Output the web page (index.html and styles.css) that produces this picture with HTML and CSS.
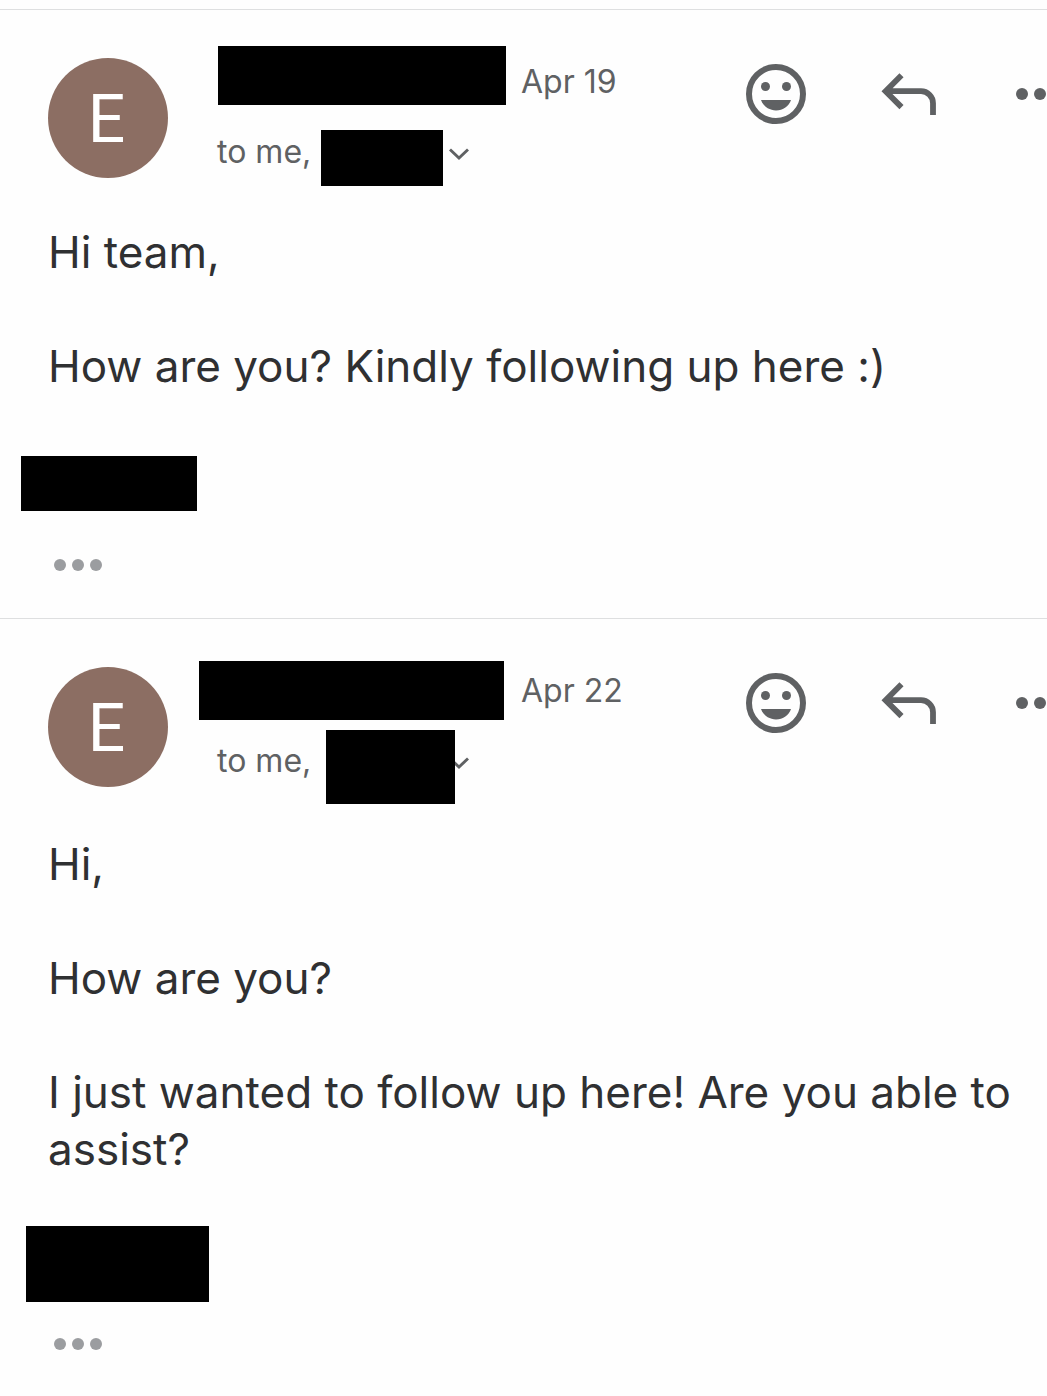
FILE: index.html
```html
<!DOCTYPE html>
<html lang="en">
<head>
<meta charset="utf-8">
<meta name="viewport" content="width=device-width, initial-scale=1">
<title>Conversation</title>
<link rel="stylesheet" href="styles.css">
</head>
<body>
<svg class="sprite" aria-hidden="true">
  <symbol id="smile" viewBox="0 0 60 60">
    <circle cx="30" cy="30" r="27" fill="none" stroke="currentColor" stroke-width="6"/>
    <circle cx="19.500" cy="22.500" r="4.500"/>
    <circle cx="40.500" cy="22.500" r="4.500"/>
    <path d="M15 36h30c-2 6-8 10.500-15 10.500S17 42 15 36z"/>
  </symbol>
  <symbol id="reply" viewBox="0 0 60 60">
    <path d="M20.500 11.300 4.600 27.200 20.500 43.100M5.500 27.200H40A12 12 0 0 1 52 39.200V51" fill="none" stroke="currentColor" stroke-width="5.800"/>
  </symbol>
  <symbol id="dots" viewBox="0 0 48 12">
    <circle cx="6" cy="6" r="6"/><circle cx="24" cy="6" r="6"/><circle cx="42" cy="6" r="6"/>
  </symbol>
  <symbol id="chevron" viewBox="0 0 20 12">
    <path d="M1 1.500 10 10 19 1.500" fill="none" stroke="currentColor" stroke-width="2.900"/>
  </symbol>
</svg>
<main class="thread">
  <article class="message message-first">
    <header class="message-header">
      <div class="avatar">E</div>
      <div class="details">
        <div class="sender-row"><span class="name"><span class="redaction"></span></span><time datetime="04-19">Apr 19</time></div>
        <div class="recipient-row"><span>to me,</span><span class="recipient"><span class="redaction"></span></span>
          <button class="expand" aria-label="Show details"><svg width="20" height="12"><use href="#chevron"/></svg></button></div>
      </div>
      <div class="actions">
        <button aria-label="Add reaction"><svg width="60" height="60"><use href="#smile"/></svg></button>
        <button aria-label="Reply"><svg width="60" height="60"><use href="#reply"/></svg></button>
        <button aria-label="More options"><svg width="48" height="12"><use href="#dots"/></svg></button>
      </div>
    </header>
    <div class="content">
      <p>Hi team,</p>
      <p>How are you? Kindly following up here :)</p>
      <div class="signature"><span class="redaction"></span></div>
      <button class="trimmed" aria-label="Show trimmed content"><svg width="48" height="12"><use href="#dots"/></svg></button>
    </div>
  </article>
  <article class="message message-second">
    <header class="message-header">
      <div class="avatar">E</div>
      <div class="details">
        <div class="sender-row"><span class="name"><span class="redaction"></span></span><time datetime="04-22">Apr 22</time></div>
        <div class="recipient-row"><span>to me,</span><span class="recipient"><span class="redaction"></span></span>
          <button class="expand" aria-label="Show details"><svg width="20" height="12"><use href="#chevron"/></svg></button></div>
      </div>
      <div class="actions">
        <button aria-label="Add reaction"><svg width="60" height="60"><use href="#smile"/></svg></button>
        <button aria-label="Reply"><svg width="60" height="60"><use href="#reply"/></svg></button>
        <button aria-label="More options"><svg width="48" height="12"><use href="#dots"/></svg></button>
      </div>
    </header>
    <div class="content">
      <p>Hi,</p>
      <p>How are you?</p>
      <p>I just wanted to follow up here! Are you able to assist?</p>
      <div class="signature"><span class="redaction"></span></div>
      <button class="trimmed" aria-label="Show trimmed content"><svg width="48" height="12"><use href="#dots"/></svg></button>
    </div>
  </article>
</main>
</body>
</html>
```
FILE: styles.css
```css
* { box-sizing: border-box; }

body {
  margin: 0;
  background: #fefefe;
  color: #2f3032;
  font-family: Inter, "Liberation Sans", sans-serif;
}

.sprite { display: none; }

svg { display: block; fill: currentColor; }

button {
  display: block;
  padding: 0;
  border: 0;
  background: none;
  color: inherit;
  cursor: pointer;
}

.thread { padding-top: 9px; }

.message {
  padding: 48px 0 41px 48px;
  border-top: 1px solid #dedfe0;
  overflow: hidden;
}

.message-header {
  display: flex;
  align-items: flex-start;
  color: #5f6163;
}

.avatar {
  flex: none;
  width: 120px;
  height: 120px;
  padding-right: 3px;
  border-radius: 50%;
  background: #8c6e63;
  color: #fff;
  font: 66px/124px Roboto, sans-serif;
  text-align: center;
}

.details {
  margin-left: 49px;
  font-size: 32px;
  line-height: 48px;
  white-space: nowrap;
}

.sender-row,
.recipient-row {
  display: flex;
  align-items: center;
}

.recipient-row { margin-top: 22px; }

.name {
  position: relative;
  width: 288px;
  height: 48px;
  margin-right: 16px;
}

.recipient {
  position: relative;
  width: 122px;
  height: 48px;
  margin: 0 6px 0 10px;
}

.expand { padding-top: 4px; }

/* Bars that cover private names */
.redaction {
  position: absolute;
  z-index: 1;
  background: #000;
}

.message-first .name .redaction { inset: -12px -1px auto 1px; height: 59px; }
.message-first .recipient .redaction { inset: 2px 0 auto 0; height: 56px; }
.message-first .signature .redaction { left: -27px; top: 4px; width: 176px; height: 55px; }

.message-second .name .redaction { inset: -6px 1px auto -18px; height: 59px; }
.message-second .recipient .redaction { inset: -7px -12px auto 5px; height: 74px; }
.message-second .signature .redaction { left: -22px; top: -9px; width: 183px; height: 76px; }

.actions {
  display: flex;
  align-items: center;
  gap: 75px;
  margin: 6px -17px 0 auto;
}

.content {
  margin-top: 46px;
  padding-right: 16px;
  font-size: 44px;
  line-height: 57px;
}

.content p { margin: 0 0 57px; }

.signature {
  position: relative;
  height: 57px;
}

.trimmed {
  padding: 6px;
  margin-top: 44px;
  color: #9b9da0;
}

.message-second .content { margin-top: 49px; }
.message-second .trimmed { margin-top: 40px; }
```
